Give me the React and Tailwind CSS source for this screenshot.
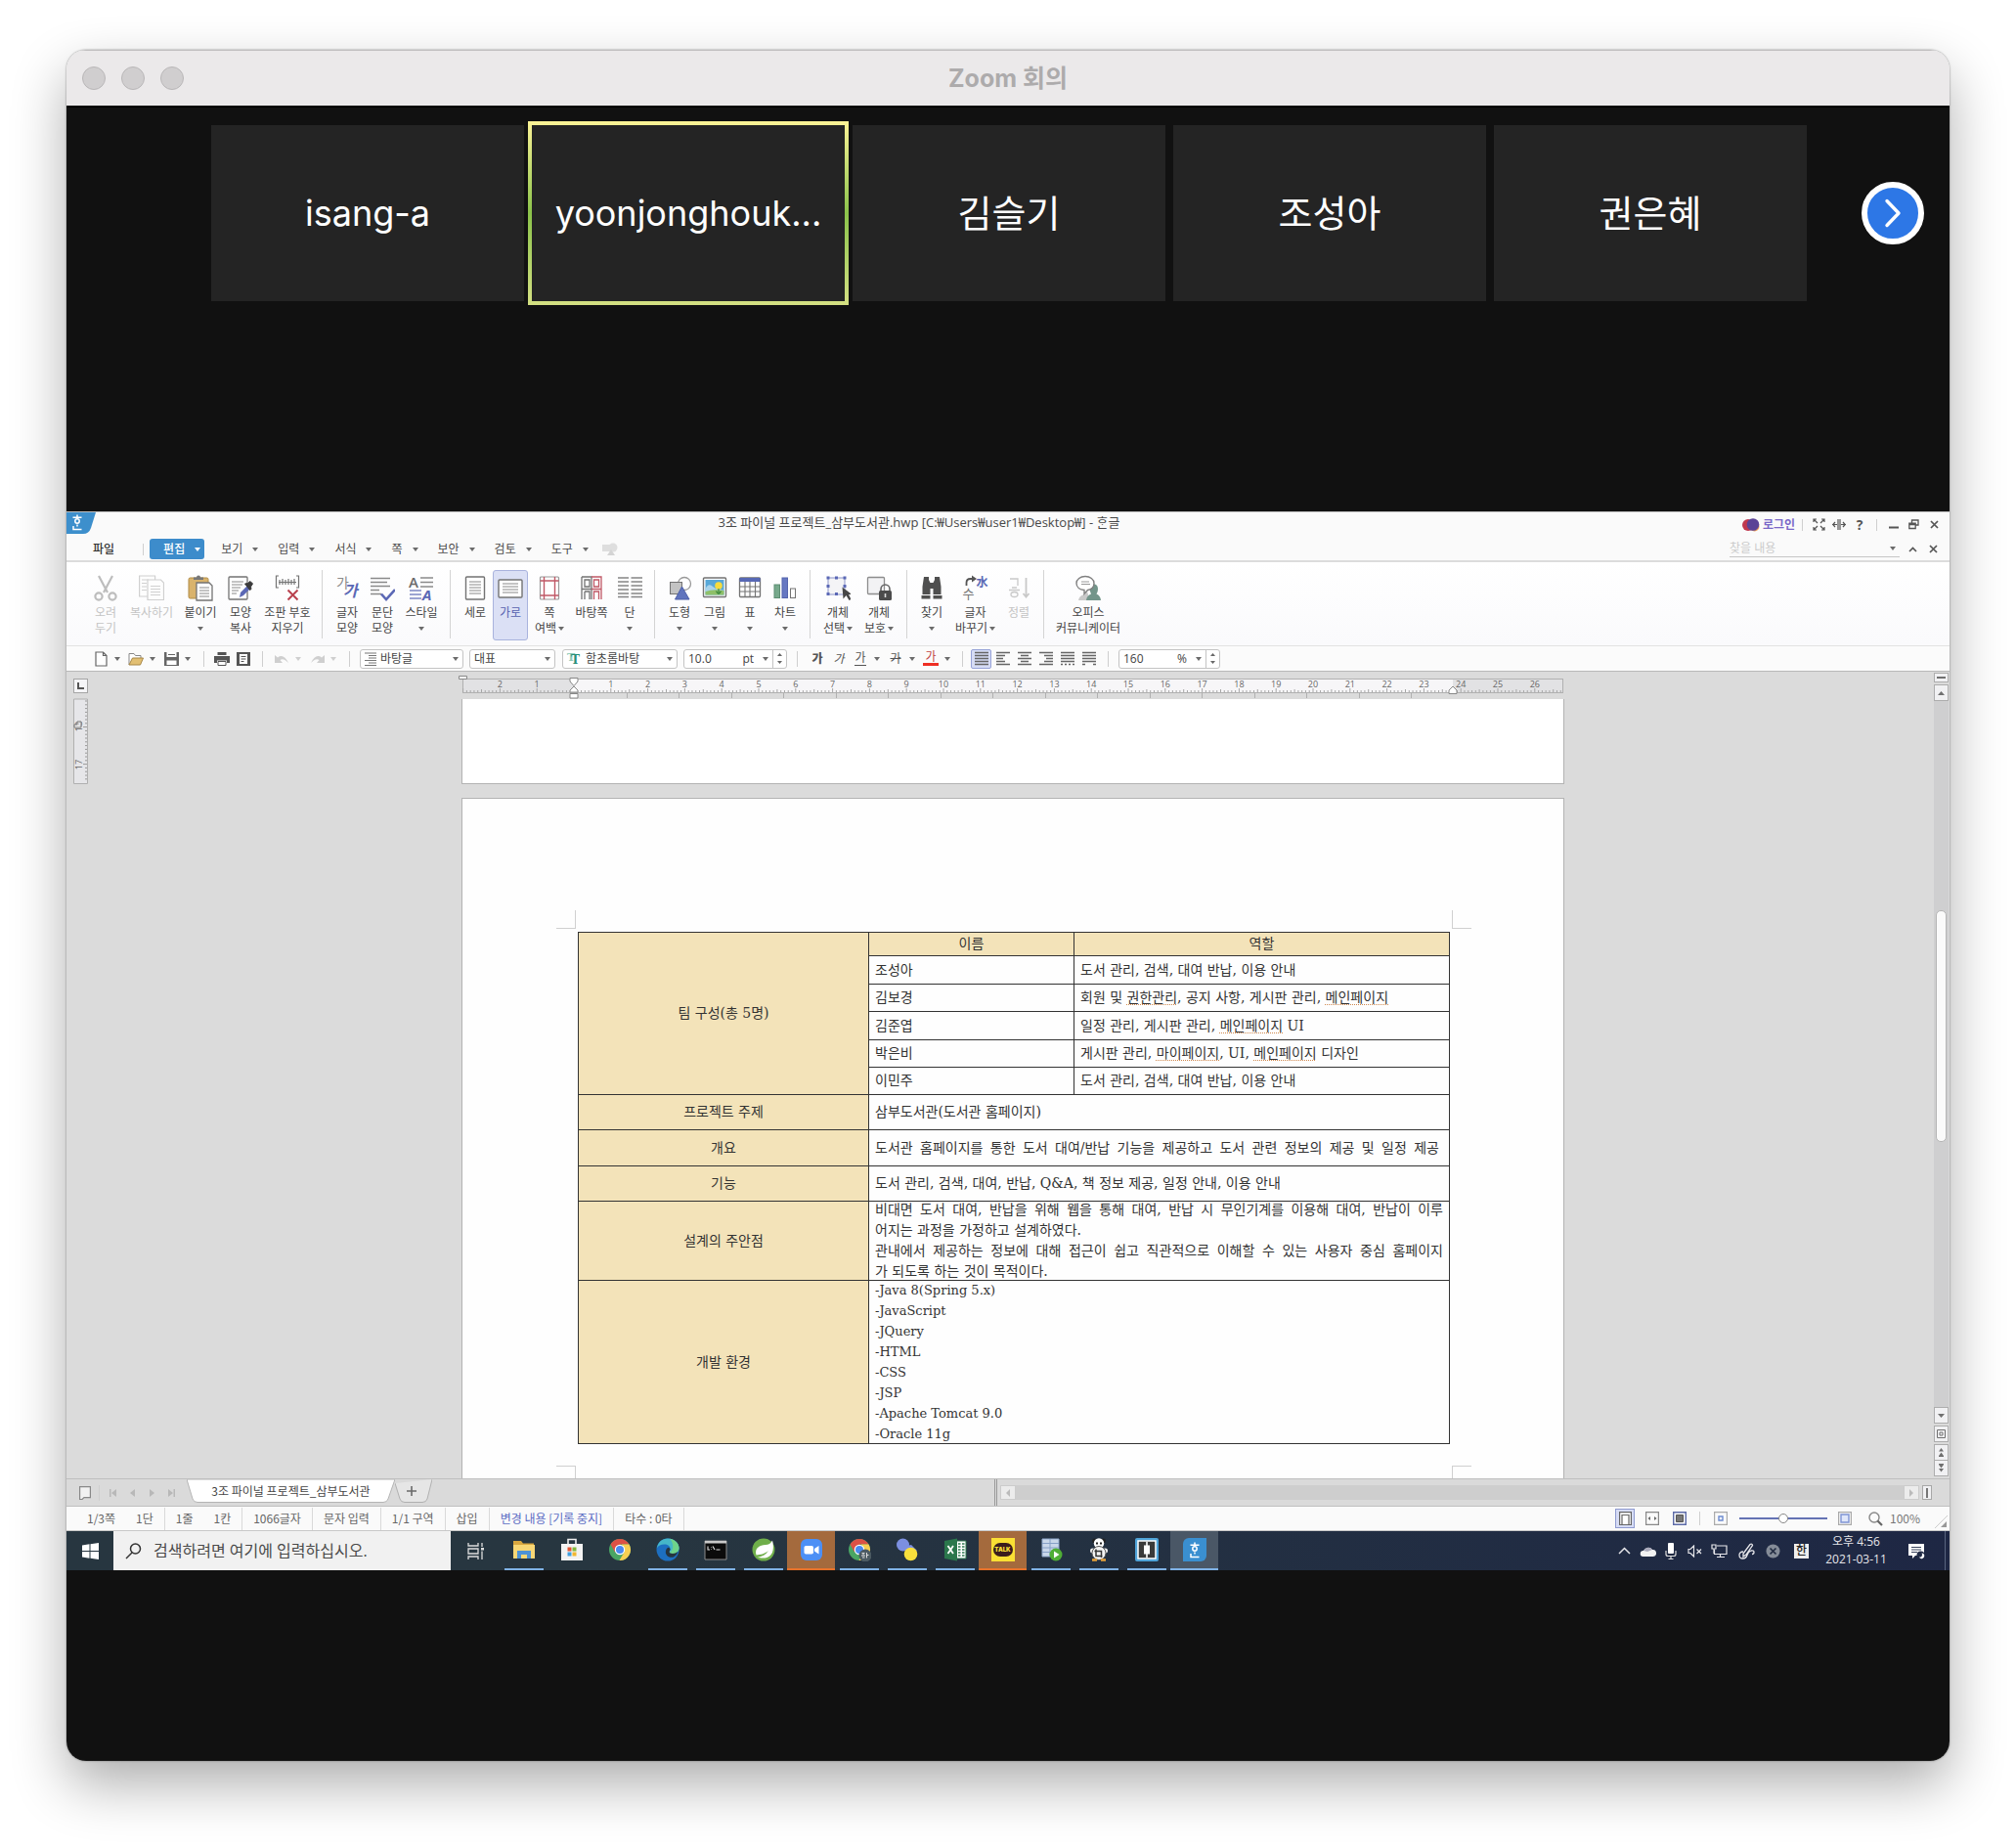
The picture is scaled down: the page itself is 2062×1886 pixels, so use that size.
import React from "react";

const UI = "font-['Open_Sans','Noto_Sans_CJK_KR',sans-serif]";

function Svg({ w, h, className = "", children, ...rest }) {
  return (
    <svg
      width={w}
      height={h}
      viewBox={`0 0 ${w} ${h}`}
      fill="none"
      aria-hidden="true"
      className={`shrink-0 ${className}`}
      {...rest}
    >
      {children}
    </svg>
  );
}

const Caret = ({ className = "text-[#6b6b6b]" }) => (
  <Svg w={6} h={4} className={className}>
    <path d="M0 0h6L3 4z" fill="currentColor" />
  </Svg>
);

const Divider = ({ className = "" }) => <span className={`w-px shrink-0 bg-[#cfcfcf] ${className}`} />;

/* ---------- Video strip ---------- */

function Tile({ name, active, size = "text-[38px]" }) {
  return (
    <li className="relative flex h-[180px] w-80 shrink-0 items-center justify-center bg-[#242424]">
      {active && (
        <span className="absolute -inset-1 bg-linear-to-b from-[#fbf396] via-[#8bc34a] to-[#d4e082]">
          <span className="absolute inset-1 bg-[#242424]" />
        </span>
      )}
      <span className={`relative font-['Inter','Noto_Sans_CJK_KR',sans-serif] leading-none text-white ${size}`}>
        {name}
      </span>
    </li>
  );
}

function VideoStrip() {
  return (
    <section className="flex h-[415px] items-start border-t-2 border-black bg-[#111111]">
      <ul className="ml-[148px] mt-[18px] flex gap-2">
        <Tile name="isang-a" size="text-4xl" />
        <Tile name="yoonjonghouk..." size="text-4xl" active />
        <Tile name="김슬기" />
        <Tile name="조성아" />
        <Tile name="권은혜" />
      </ul>
      <button
        aria-label="다음"
        className="mr-[26px] ml-auto mt-[76px] flex size-16 shrink-0 items-center justify-center rounded-full border-[6px] border-white bg-[#2d77e6]"
      >
        <Svg w={20} h={30}>
          <path d="M4 2.500L16 15 4 27.500" stroke="#fff" strokeWidth="3.400" strokeLinecap="round" strokeLinejoin="round" />
        </Svg>
      </button>
    </section>
  );
}

/* ---------- Word processor: title and menus ---------- */

const HanGlyph = ({ className = "" }) => (
  <svg viewBox="0 0 12 17" fill="none" aria-hidden="true" className={className} stroke="currentColor" strokeWidth="1.500">
    <path d="M6 .5v2M1.500 3.300h9" />
    <circle cx="6" cy="7" r="2.200" />
    <path d="M6 10.500v2M2 12v3.500h8.500" />
  </svg>
);

function TitleRow() {
  return (
    <div className="flex h-[26px] border-t border-[#bdbdbd] bg-[#fafafa]">
      <div className="relative h-[22px] w-[30px] shrink-0">
        <Svg w={30} h={22}>
          <path d="M0 0h30l-5 16q-2 6-8 6H0z" fill="#3d8fcc" />
        </Svg>
        <HanGlyph className="absolute top-[2px] left-[5px] h-[17px] w-3 text-white" />
      </div>
      <h2 className="flex-1 text-center text-[13px] leading-[21px] whitespace-nowrap text-[#484848]">
        3조 파이널 프로젝트_삼부도서관.hwp [C:₩Users₩user1₩Desktop₩] - ᄒᆞᆫ글
      </h2>
      <div className="flex w-[212px] shrink-0 items-center text-[#555]">
        <Svg w={18} h={14}>
          <circle cx="6" cy="7" r="6" fill="#c0384f" />
          <circle cx="12.500" cy="8.500" r="5" fill="#f0a35b" />
          <circle cx="11" cy="6.500" r="6.300" fill="#5b4396" />
        </Svg>
        <button className="ml-[3px] text-xs leading-4 font-bold whitespace-nowrap text-[#7b68c8]">로그인</button>
        <Divider className="ml-[7px] h-3" />
        <button aria-label="전체 화면" className="ml-[10px]">
          <Svg w={13} h={13} stroke="currentColor" strokeWidth="1.200">
            <path d="M1 4V1h3M9 1h3v3M12 9v3H9M4 12H1V9M1 1l4 4M12 1L8 5M12 12L8 8M1 12l4-4" />
          </Svg>
        </button>
        <button aria-label="창 나누기" className="ml-[7px]">
          <Svg w={14} h={13} stroke="currentColor" strokeWidth="1.200">
            <path d="M6 1v11M8 1v11M0 6.500h5M9 6.500h5M3 4L.8 6.500 3 9M11 4l2.200 2.500L11 9" />
          </Svg>
        </button>
        <button aria-label="도움말" className="ml-2 w-3 text-sm leading-none font-bold">?</button>
        <Divider className="ml-[11px] h-3" />
        <button aria-label="최소화" className="ml-3">
          <Svg w={10} h={12} stroke="currentColor" strokeWidth="2"><path d="M0 8.500h10" /></Svg>
        </button>
        <button aria-label="이전 크기로" className="ml-[10px]">
          <Svg w={11} h={11} stroke="currentColor" strokeWidth="1.300">
            <path d="M3.500 4V1H10v5H7.500M.8 4.200h6.400v5.300H.8zM.8 5.500h6.400" />
          </Svg>
        </button>
        <button aria-label="닫기" className="ml-[11px]">
          <Svg w={9} h={9} stroke="currentColor" strokeWidth="1.700"><path d="M1 1l7 7M8 1L1 8" /></Svg>
        </button>
      </div>
    </div>
  );
}

function MenuRow() {
  const items = ["보기", "입력", "서식", "쪽", "보안", "검토", "도구"];
  return (
    <nav className="flex h-[26px] items-center border-b-2 border-[#dcdcdc] bg-[#fafafa] pt-px pl-[27px] text-xs leading-4 text-[#4a4a4a]">
      <button className="font-medium whitespace-nowrap text-[#333]">파일</button>
      <Divider className="ml-[29px] h-3" />
      <button className="mr-[3px] ml-[6px] flex h-[21px] shrink-0 items-center gap-[10px] rounded-[3px] bg-[#3d8ccb] pr-1 pl-[14px] font-medium text-white">
        편집
        <Caret className="text-white" />
      </button>
      {items.map((t) => (
        <button key={t} className="flex shrink-0 items-center gap-[10px] pr-[6px] pl-[14px] whitespace-nowrap">
          {t}
          <Caret />
        </button>
      ))}
      <Svg w={16} h={14} className="ml-2">
        <rect y="2" width="8" height="7" fill="#dedede" />
        <circle cx="11" cy="5" r="4.500" fill="#dedede" />
        <path d="M5 13l4-6 4 6z" fill="#d4d4d4" />
      </Svg>
      <div className="mr-3 ml-auto flex items-center text-[#555]">
        <label className="flex w-[174px] items-center border-b border-[#c6c6c6]">
          <input
            aria-label="찾을 내용"
            placeholder="찾을 내용"
            className="w-0 flex-1 bg-transparent text-xs leading-4 outline-none placeholder:text-[#cbcbcb]"
          />
          <Caret className="mr-1 text-[#6b6b6b]" />
        </label>
        <button aria-label="리본 접기" className="ml-[9px]">
          <Svg w={9} h={6} stroke="currentColor" strokeWidth="1.600"><path d="M1 5l3.500-3.500L8 5" /></Svg>
        </button>
        <button aria-label="문서 닫기" className="ml-3">
          <Svg w={9} h={9} stroke="currentColor" strokeWidth="1.700"><path d="M1 1l7 7M8 1L1 8" /></Svg>
        </button>
      </div>
    </nav>
  );
}

/* ---------- Ribbon ---------- */

const G = "#737373";
const B = "#5b68b5";
const R = "#c05866";

const ribbonIcons = {
  cut: (
    <g stroke="#bdbdbd" strokeWidth="2.200">
      <path d="M6 1l9 17M20 1l-9 17" />
      <circle cx="6" cy="22" r="3.600" />
      <circle cx="20" cy="22" r="3.600" />
    </g>
  ),
  copy: (
    <g stroke="#d0d0d0" strokeWidth="1.200" fill="#fdfdfd">
      <path d="M.6 1h16v21H.6z" />
      <path d="M3 5h7M3 8.500h5M3 12h5M3 15.500h5" />
      <path d="M9 5h13.500l3 3v17.500H9z" />
      <path d="M12 11.500h10M12 14.500h10M12 17.500h10M12 20.500h10" />
    </g>
  ),
  paste: (
    <g>
      <rect x="1" y="3" width="20" height="21" rx="1.500" fill="#d9b36c" stroke="#b08b45" />
      <path d="M6 5V2.500h3a2 2 0 014 0h3V5z" fill="#777" />
      <path d="M9 8h13l3 3v15H9z" fill="#fff" stroke={G} strokeWidth="1.300" />
      <path d="M12 13h10M12 16h10M12 19h10M12 22h10" stroke="#8a8a8a" strokeWidth="1.200" />
    </g>
  ),
  picker: (
    <g>
      <rect x="1" y="2" width="19" height="23" rx="1" fill="#fff" stroke={G} strokeWidth="1.300" />
      <path d="M4 7h12M4 10h11M4 13h9M4 16h7M4 19h5" stroke="#8a8a8a" strokeWidth="1.200" />
      <path d="M12 23l1-5 7-7 3 3-7 7z" fill={B} />
      <path d="M17.500 9l3-.5L23 6.500l2.500 2.500-2 3 .5 2.500-1.500 1z" fill="#3b3b3b" stroke="#3b3b3b" />
    </g>
  ),
  clear: (
    <g>
      <path d="M4 1H1.500v12H4M22 1h2.500v12H22" stroke={G} strokeWidth="1.200" />
      <path d="M5 5v5M8 4v6M11 5v5M14 4v6M17 5v5M20 4v6M4 7.500h18" stroke={G} strokeWidth="1.200" />
      <path d="M13.500 15.500l10 10M23.500 15.500l-10 10" stroke="#b9424f" strokeWidth="2" />
    </g>
  ),
  para: (
    <g>
      <path d="M1 3.500h20M1 7.500h17M1 11.500h20M1 15.500h9M1 19.500h11" stroke="#8a8a8a" strokeWidth="1.400" />
      <path d="M12 19.500l5 5.500 9-10" stroke={B} strokeWidth="2.600" />
    </g>
  ),
  portrait: (
    <g>
      <rect x="3.500" y="2" width="19" height="23" rx="1" fill="#fff" stroke={G} strokeWidth="1.400" />
      <path d="M7 7h12M7 10h12M7 13h12M7 16h12M7 19h12" stroke="#8a8a8a" strokeWidth="1.200" />
    </g>
  ),
  landscape: (
    <g>
      <rect x="1" y="5" width="24" height="18" rx="1" fill="#fff" stroke={G} strokeWidth="1.400" />
      <path d="M5 9h16M5 12h16M5 15h16M5 18h16" stroke="#8a8a8a" strokeWidth="1.200" />
    </g>
  ),
  margin: (
    <g>
      <rect x="3.500" y="2" width="19" height="23" rx="1" fill="#fff" stroke="#999" strokeWidth="1.200" />
      <path d="M7.500 2v23M18.500 2v23M3.500 6h19M3.500 21h19" stroke={R} strokeWidth="1.400" />
    </g>
  ),
  master: (
    <g strokeWidth="1.300">
      <path d="M3 2h10v23M3 2v23M6 5h5v7H6zM3 14.500h10M6 17h5v8M6 17v8" stroke={G} />
      <path d="M13 2h10v23M15.500 5h5v7h-5zM13 14.500h10M15.500 25v-8h5v8" stroke={R} />
    </g>
  ),
  columns: (
    <path d="M1 3h11M1 7h11M1 11h11M1 15h11M1 19h11M1 22.500h11M14.500 3H26M14.500 7H26M14.500 11H26M14.500 15H26M14.500 19H26M14.500 22.500H26" stroke="#858585" strokeWidth="1.400" />
  ),
  shape: (
    <g>
      <circle cx="18" cy="9" r="6.500" fill="#fff" stroke="#999" strokeWidth="1.300" />
      <rect x="3.500" y="7.500" width="12" height="12" fill="#c3c3c3" stroke={G} />
      <path d="M8.500 25L15.500 12 23 25z" fill="#6074bd" stroke="#4d5fa8" />
    </g>
  ),
  picture: (
    <g>
      <rect x="1.500" y="3" width="23" height="19.500" rx="1" fill="#fff" stroke={G} strokeWidth="1.400" />
      <path d="M3.500 5h19v15.500h-19z" fill="#58a8d8" />
      <path d="M3.500 14q3-6 7-2.500T17 14l5.500 2v4.500h-19z" fill="#a9d3ea" />
      <path d="M3.500 17q8-3 19-1v4.500h-19z" fill="#8fc069" />
      <circle cx="17" cy="11" r="3.800" fill="#f7dc3d" />
      <path d="M17 14v6M14.500 16.500q1 2.500 2.500 2.500t2.500-2.500" stroke="#3f8a3f" strokeWidth="1.200" />
    </g>
  ),
  table: (
    <g>
      <rect x="2.500" y="3" width="21" height="19.500" rx="1" fill="#fff" stroke={G} strokeWidth="1.300" />
      <path d="M2.500 3h21v4h-21z" fill="#5768b4" />
      <path d="M2.500 12h21M2.500 17h21M8 7v15M13 7v15M18.500 7v15" stroke={G} strokeWidth="1.100" />
    </g>
  ),
  chart: (
    <g>
      <rect x="2" y="10" width="5.500" height="13.500" fill="#77a98c" stroke="#5d8e72" />
      <rect x="10" y="3" width="5.500" height="20.500" fill="#6678c2" stroke="#5464ad" />
      <rect x="18.500" y="14" width="5" height="9.500" fill="#fff" stroke={G} />
    </g>
  ),
  select: (
    <g>
      <rect x="3" y="3" width="17" height="17" fill="#f4f4f6" stroke="#8b94c9" />
      <path d="M1.500 1.500h3v3h-3zM10 1.500h3v3h-3zM18.500 1.500h3v3h-3zM1.500 10h3v3h-3zM1.500 18h3v3h-3zM10 18h3v3h-3zM18.500 10h3v3h-3z" fill={B} />
      <path d="M17.500 12.500l1 12 3-3.500 3 5 2-1-2.500-5h3.500z" fill="#474747" />
    </g>
  ),
  protect: (
    <g>
      <rect x="1.500" y="2.500" width="17" height="17" rx="1" fill="#f2f2f4" stroke="#8d8d8d" strokeWidth="1.300" />
      <path d="M15 17v-2.500a4.500 4.500 0 019 0V17" stroke="#666" strokeWidth="1.600" />
      <rect x="13" y="16" width="13" height="10" rx="1.500" fill="#4b4b4b" />
      <path d="M19.500 19v4" stroke="#ddd" strokeWidth="1.600" />
    </g>
  ),
  find: (
    <g fill="#4f4f4f">
      <path d="M5 2h5v3l1.500 3V20H3.500V12zM21 2h-5v3l-1.500 3V20h8V12z" />
      <path d="M11 8h4v6h-4zM2.500 21h9v3.500h-9zM14.500 21h9v3.500h-9z" />
    </g>
  ),
  sort: (
    <g stroke="#c9c9c9" strokeWidth="1.300">
      <path d="M4 4h8v7M3 15.500h11M6 13h5" />
      <ellipse cx="8.500" cy="20" rx="3.500" ry="2.500" />
      <path d="M20.500 3v18M17.500 19l3 3.500 3-3.500" strokeWidth="1.800" />
    </g>
  ),
  talk: (
    <g>
      <path d="M3 26q1-5 6-6l3-3 3 9z" fill="#c9c9c9" />
      <path d="M11 26q.5-5 5-6.500-2-4-1-8 2-3 5-2 3 1 3 5 0 3-1.500 5 4 1.500 4.500 6.500z" fill="#73958a" />
      <path d="M10 1.500c5 0 9 3 9 7s-3 6.500-6.500 7L9 19.500v-4c-4.500-.3-8-3-8-7s4-7 9-7z" fill="#fff" stroke="#808080" strokeWidth="1.400" />
      <path d="M6 7h8M6 9.500h9" stroke="#999" strokeWidth="1.100" />
    </g>
  ),
};

function RibbonIcon({ name }) {
  if (name === "char")
    return (
      <span className="relative block h-[27px] w-[26px] leading-none">
        <span className="absolute top-[1px] left-[2px] text-sm leading-none text-[#8a8a8a]">가</span>
        <span className="absolute top-[8px] left-[9px] text-base leading-none font-bold text-[#5b68b5] italic">가</span>
      </span>
    );
  if (name === "style")
    return (
      <span className="relative block h-[27px] w-[26px] leading-none">
        <Svg w={26} h={27} stroke="#8a8a8a" strokeWidth="1.300">
          <path d="M12 3h13M12 7.500h13M12 12h13" />
          <path d="M1 16h12M1 20h12M1 24h12" stroke="#7c86c4" />
        </Svg>
        <span className="absolute top-0 left-0 text-[15px] leading-none font-semibold text-[#6a6a6a]">A</span>
        <span className="absolute top-[13px] left-[14px] text-[15px] leading-none font-bold text-[#5b68b5] italic">A</span>
      </span>
    );
  if (name === "replace")
    return (
      <span className="relative block h-[27px] w-[26px] leading-none">
        <Svg w={26} h={27}>
          <path d="M3.500 11V8q0-4 4-4h2" stroke="#555" strokeWidth="1.800" />
          <path d="M9 .5l5 3.500-5 3.500z" fill="#555" />
        </Svg>
        <span className="absolute top-[13px] left-0 text-[13px] leading-none text-[#777]">수</span>
        <span className="absolute top-[2px] left-[14px] text-xs leading-none font-bold text-[#5b68b5]">水</span>
      </span>
    );
  return (
    <Svg w={26} h={27}>
      {ribbonIcons[name]}
    </Svg>
  );
}

const ribbonGroups = [
  [
    { w: "w-9", icon: "cut", a: "오려", b: "두기", off: true },
    { w: "w-[58px]", icon: "copy", a: "복사하기", off: true },
    { w: "w-[42px]", icon: "paste", a: "붙이기", drop: true },
    { w: "w-10", icon: "picker", a: "모양", b: "복사" },
    { w: "w-14", icon: "clear", a: "조판 부호", b: "지우기" },
  ],
  [
    { w: "w-9", icon: "char", a: "글자", b: "모양" },
    { w: "w-9", icon: "para", a: "문단", b: "모양" },
    { w: "w-11", icon: "style", a: "스타일", drop: true },
  ],
  [
    { w: "w-9", icon: "portrait", a: "세로" },
    { w: "w-9", icon: "landscape", a: "가로", on: true },
    { w: "w-11", icon: "margin", a: "쪽", b: "여백", drop: true },
    { w: "w-[42px]", icon: "master", a: "바탕쪽" },
    { w: "w-9", icon: "columns", a: "단", drop: true },
  ],
  [
    { w: "w-9", icon: "shape", a: "도형", drop: true },
    { w: "w-9", icon: "picture", a: "그림", drop: true },
    { w: "w-9", icon: "table", a: "표", drop: true },
    { w: "w-9", icon: "chart", a: "차트", drop: true },
  ],
  [
    { w: "w-[42px]", icon: "select", a: "개체", b: "선택", drop: true },
    { w: "w-[42px]", icon: "protect", a: "개체", b: "보호", drop: true },
  ],
  [
    { w: "w-9", icon: "find", a: "찾기", drop: true },
    { w: "w-[53px]", icon: "replace", a: "글자", b: "바꾸기", drop: true },
    { w: "w-9", icon: "sort", a: "정렬", off: true },
  ],
  [{ w: "w-[76px]", icon: "talk", a: "오피스", b: "커뮤니케이터" }],
];

function RibbonButton({ w, icon, a, b, drop, off, on }) {
  const tone = off ? "text-[#c4c4c4]" : on ? "text-[#5560b0]" : "text-[#444]";
  return (
    <button
      disabled={off}
      className={`flex h-[72px] shrink-0 flex-col items-center rounded-[3px] border pt-1 text-xs leading-4 whitespace-nowrap ${w} ${tone} ${
        on ? "border-[#a9b3dd] bg-[#dbe0f5]" : "border-transparent"
      }`}
    >
      <RibbonIcon name={icon} />
      <span className="mt-1">{a}</span>
      <span className="flex h-4 items-center gap-[2px]">
        {b}
        {drop && <Caret />}
      </span>
    </button>
  );
}

function Ribbon() {
  return (
    <div className="flex h-[86px] border-b border-[#e2e2e2] bg-linear-to-b from-white to-[#fafafc] pt-2 pl-[15px]">
      {ribbonGroups.map((group, i) => (
        <div key={i} className="flex h-[70px] items-start border-r border-[#d4d4d4] px-[7px] last:border-r-0">
          {group.map((item) => (
            <RibbonButton key={item.icon} {...item} />
          ))}
        </div>
      ))}
    </div>
  );
}

/* ---------- Formatting bar ---------- */

function Cell({ label, children, faded }) {
  return (
    <button aria-label={label} className="flex w-9 shrink-0 items-center gap-[6px]">
      <span className="flex w-4 justify-center">{children}</span>
      <Caret className={faded ? "text-[#cfcfcf]" : "text-[#6b6b6b]"} />
    </button>
  );
}

function Picker({ label, value, icon, className, pad }) {
  return (
    <div className={`relative flex h-5 shrink-0 items-center rounded-[3px] border border-[#c4c4c4] bg-white ${className}`}>
      {icon && <span className="pointer-events-none absolute left-1">{icon}</span>}
      <select aria-label={label} className={`h-full w-full appearance-none bg-transparent text-xs leading-4 text-[#444] ${pad}`}>
        <option>{value}</option>
      </select>
      <Caret className="pointer-events-none absolute right-1 text-[#6b6b6b]" />
    </div>
  );
}

function Stepper({ label, value, unit, className }) {
  return (
    <label className={`flex h-5 shrink-0 items-center rounded-[3px] border border-[#c4c4c4] bg-white text-xs leading-4 text-[#444] ${className}`}>
      <input aria-label={label} defaultValue={value} className="w-0 flex-1 bg-transparent pl-1 outline-none" />
      <span>{unit}</span>
      <Caret className="mr-1 ml-[9px] text-[#6b6b6b]" />
      <span className="flex h-full w-[14px] flex-col items-center justify-center gap-[5px] border-l border-[#c4c4c4]">
        <Svg w={5} h={3}><path d="M0 3h5L2.500 0z" fill="#666" /></Svg>
        <Svg w={5} h={3}><path d="M0 0h5L2.500 3z" fill="#666" /></Svg>
      </span>
    </label>
  );
}

const alignPaths = {
  양쪽: "M0 1.500h14M0 4.500h14M0 7.500h14M0 10.500h14M0 13.500h14",
  왼쪽: "M0 1.500h14M0 4.500h9M0 7.500h7M0 10.500h9M0 13.500h14",
  가운데: "M0 1.500h14M3 4.500h8M0 7.500h14M3 10.500h8M0 13.500h14",
  오른쪽: "M0 1.500h14M5 4.500h9M7 7.500h7M5 10.500h9M0 13.500h14",
  배분: "M0 1.500h14M0 4.500h14M0 7.500h14M0 10.500h14M0 13.500h2M4 13.500h2M8 13.500h2M12 13.500h2",
  나눔: "M0 1.500h14M0 4.500h14M0 7.500h14M0 10.500h14M0 13.500h3M11 13.500h3",
};

const AlignIcon = ({ name }) => (
  <Svg w={14} h={15} stroke="#666" strokeWidth="1.600"><path d={alignPaths[name]} /></Svg>
);

function FormatBar() {
  return (
    <div className="flex h-[26px] items-center border-b border-[#b9b9b9] bg-[#fbfbfb] pl-[27px]">
      <Cell label="새 문서">
        <Svg w={13} h={16}><path d="M1 1h7.500L12 4.500V15H1zM8.500 1v3.500H12" fill="#fff" stroke="#666" strokeWidth="1.200" /></Svg>
      </Cell>
      <Cell label="열기">
        <Svg w={16} h={14}>
          <path d="M1 13V1.500h5l1.500 2H13v3" fill="#fff" stroke="#888" />
          <path d="M1 13L4.500 6H15.500L12.500 13z" fill="#e2bf72" stroke="#a78746" />
        </Svg>
      </Cell>
      <Cell label="저장">
        <Svg w={15} h={14}><path d="M0 0h15v14H0z" fill="#666" /><path d="M2.500 0h10v5h-10zM2.500 8.500h10V13h-10z" fill="#fff" /><path d="M4 2.500h7" stroke="#666" /></Svg>
      </Cell>
      <Divider className="ml-[5px] h-4" />
      <button aria-label="인쇄" className="ml-[10px]">
        <Svg w={16} h={14}>
          <path d="M3.500 0h9v3h-9zM0 4h16v7h-3V8.500H3V11H0z" fill="#555" />
          <path d="M4 9.500h8V13.500H4z" fill="#fff" stroke="#555" />
        </Svg>
      </button>
      <button aria-label="미리 보기" className="ml-[6px]">
        <Svg w={16} h={14}>
          <path d="M1 0h14v14H1z" fill="#555" />
          <path d="M4 2h8v10H4z" fill="#fff" />
          <path d="M5.500 4.500h5M5.500 7h5M5.500 9.500h3" stroke="#555" />
        </Svg>
      </button>
      <Divider className="mr-[11px] ml-[11px] h-4" />
      <Cell label="되돌리기" faded>
        <Svg w={15} h={10}><path d="M0 9V1l3 2.500Q9-1 14 9 9 3.500 5.500 6L8 9z" fill="#cfcfcf" /></Svg>
      </Cell>
      <Cell label="다시 실행" faded>
        <Svg w={15} h={10}><path d="M15 9V1l-3 2.500Q6-1 1 9q5-5.500 8.500-3L7 9z" fill="#cfcfcf" /></Svg>
      </Cell>
      <Divider className="ml-[5px] h-4" />
      <Picker
        label="스타일" value="바탕글" className="ml-[10px] w-[106px]" pad="pl-5"
        icon={<Svg w={12} h={14} stroke="#777" strokeWidth="1.200"><path d="M0 1h12M4 3.500h8M4 6h8M0 8.500h12M4 11h8M0 13.500h12" /></Svg>}
      />
      <Picker label="언어" value="대표" className="ml-[6px] w-[88px]" pad="pl-1" />
      <Picker
        label="글꼴" value="함초롬바탕" className="ml-[7px] w-[118px]" pad="pl-[23px]"
        icon={
          <span className="relative block h-[14px] w-4 font-['DejaVu_Serif',serif] leading-none font-bold">
            <span className="absolute top-0 left-0 text-[11px] leading-none text-[#8cc9b8]">T</span>
            <span className="absolute top-[2px] left-1 text-xs leading-none text-[#2a8f78]">T</span>
          </span>
        }
      />
      <Stepper label="글자 크기" value="10.0" unit="pt" className="ml-[6px] w-[106px]" />
      <Divider className="ml-[10px] h-4" />
      <div className="ml-3 flex items-center text-xs leading-4 text-[#555]">
        <button className="mr-[6px] w-4 font-black">가</button>
        <button className="mr-[6px] w-4 italic">가</button>
        <Cell label="밑줄"><span className="border-b border-[#555] leading-[14px]">가</span></Cell>
        <Cell label="취소선"><span className="line-through">가</span></Cell>
        <Cell label="글자 색"><span className="w-4 border-b-[3px] border-[#ee2f24] text-center leading-[12px] text-[#c24545]">가</span></Cell>
      </div>
      <Divider className="ml-1 h-4" />
      <button aria-label="양쪽 정렬" className="ml-2 flex h-5 w-[21px] shrink-0 items-center justify-center rounded-[2px] border border-[#97a3d8] bg-[#d6dcf5]">
        <AlignIcon name="양쪽" />
      </button>
      <div className="ml-[5px] flex gap-2">
        {["왼쪽", "가운데", "오른쪽", "배분", "나눔"].map((n) => (
          <button key={n} aria-label={`${n} 정렬`}><AlignIcon name={n} /></button>
        ))}
      </div>
      <Divider className="ml-3 h-4" />
      <Stepper label="줄 간격" value="160" unit="%" className="ml-[10px] w-[104px]" />
    </div>
  );
}

/* ---------- Document ---------- */

function Ruler() {
  const cm = 37.8;
  const zero = 115;
  const ticks = [];
  for (let i = -30; i <= 267; i++) {
    const x = zero + (i * cm) / 10;
    const len = i % 10 === 0 ? 4 : i % 5 === 0 ? 3 : 2;
    ticks.push(<path key={i} d={`M${x} 21v-${len}`} />);
  }
  const labels = [];
  for (let n = -2; n <= 26; n++) if (n !== 0) labels.push(n);
  return (
    <svg viewBox="0 0 1128 28" className="block h-7 w-[1128px] overflow-visible" aria-hidden="true">
      <rect x="1.500" y="7.500" width="1125" height="14" fill="#e2e2e4" stroke="#b0b0b0" />
      <rect x="115" y="8" width="899" height="13" fill="#f7f6f8" />
      <g stroke="#a6a6a6">{ticks}</g>
      <g stroke="#b0b0b0">
        {Array.from({ length: 16 }, (_, k) => (
          <path key={k} d={`M${Math.round(115 + (k + 1) * 53.5)}.5 22v5`} />
        ))}
      </g>
      <g fontSize="9" fill="#666" textAnchor="middle">
        {labels.map((n) => (
          <text key={n} x={zero + n * cm} y="15.500">{Math.abs(n)}</text>
        ))}
      </g>
      <g fill="#fff" stroke="#888">
        <path d="M-2.500 4.500h8v3h-8z" />
        <path d="M111 6.500h8v3.500l-4 4.500-4-4.500z" />
        <path d="M115 15l4 4v2h-8v-2zM111 22.500h8v4.500h-8z" />
        <path d="M1014 15l4 4v3.500h-8V19z" />
      </g>
    </svg>
  );
}

const Typo = ({ children }) => (
  <span className="underline decoration-[#d08a50] decoration-dotted decoration-1 underline-offset-2">{children}</span>
);

const members = [
  ["h-[29px]", "조성아", <>도서 관리, 검색, 대여 반납, 이용 안내</>],
  ["h-7", "김보경", <>회원 및 <Typo>권한관리</Typo>, 공지 사항, 게시판 관리, <Typo>메인페이지</Typo></>],
  ["h-[29px]", "김준엽", <>일정 관리, 게시판 관리, <Typo>메인페이지</Typo> UI</>],
  ["h-7", "박은비", <>게시판 관리, <Typo>마이페이지</Typo>, UI, <Typo>메인페이지</Typo> 디자인</>],
  ["h-7", "이민주", <>도서 관리, 검색, 대여 반납, 이용 안내</>],
];

const stack = ["Java 8(Spring 5.x)", "JavaScript", "JQuery", "HTML", "CSS", "JSP", "Apache Tomcat 9.0", "Oracle 11g"];

function DocTable() {
  const head = "border border-[#333] bg-[#f3e3b9] p-0 text-center font-normal";
  const cell = "border border-[#333] px-[6px] py-0";
  return (
    <table className="w-full table-fixed border-collapse font-['DejaVu_Serif','Noto_Sans_CJK_KR',serif] text-sm leading-[21px] whitespace-nowrap text-[#333]">
      <colgroup>
        <col className="w-[297px]" />
        <col className="w-[210px]" />
        <col />
      </colgroup>
      <tbody>
        <tr className="h-6">
          <th rowSpan={6} scope="rowgroup" className={head}>팀 구성(총 5명)</th>
          <th scope="col" className={head}>이름</th>
          <th scope="col" className={head}>역할</th>
        </tr>
        {members.map(([h, name, role]) => (
          <tr key={name} className={h}>
            <td className={cell}>{name}</td>
            <td className={cell}>{role}</td>
          </tr>
        ))}
        <tr className="h-9">
          <th scope="row" className={head}>프로젝트 주제</th>
          <td colSpan={2} className={cell}>삼부도서관(도서관 홈페이지)</td>
        </tr>
        <tr className="h-[37px]">
          <th scope="row" className={head}>개요</th>
          <td colSpan={2} className={cell}>
            <p className="mr-1 whitespace-normal [text-align-last:justify]">
              도서관 홈페이지를 통한 도서 대여/반납 기능을 제공하고 도서 관련 정보의 제공 및 일정 제공
            </p>
          </td>
        </tr>
        <tr className="h-9">
          <th scope="row" className={head}>기능</th>
          <td colSpan={2} className={cell}>도서 관리, 검색, 대여, 반납, Q&amp;A, 책 정보 제공, 일정 안내, 이용 안내</td>
        </tr>
        <tr className="h-[81px]">
          <th scope="row" className={head}>설계의 주안점</th>
          <td colSpan={2} className={`${cell} whitespace-normal`}>
            <div className="flex h-20 flex-col justify-center">
              <p className="shrink-0 [text-align-last:justify]">비대면 도서 대여, 반납을 위해 웹을 통해 대여, 반납 시 무인기계를 이용해 대여, 반납이 이루</p>
              <p className="shrink-0">어지는 과정을 가정하고 설계하였다.</p>
              <p className="shrink-0 [text-align-last:justify]">관내에서 제공하는 정보에 대해 접근이 쉽고 직관적으로 이해할 수 있는 사용자 중심 홈페이지</p>
              <p className="shrink-0">가 되도록 하는 것이 목적이다.</p>
            </div>
          </td>
        </tr>
        <tr className="h-[167px]">
          <th scope="row" className={head}>개발 환경</th>
          <td colSpan={2} className={`${cell} text-[13px]`}>
            <div className="flex h-[166px] flex-col justify-center">
              {stack.map((s) => (
                <p key={s} className="shrink-0 leading-[21px]">-{s}</p>
              ))}
            </div>
          </td>
        </tr>
      </tbody>
    </table>
  );
}

function ScrollButton({ label, className, children }) {
  return (
    <button aria-label={label} className={`flex w-[15px] shrink-0 items-center justify-center border border-[#adadad] bg-[#f1f1f3] text-[#707070] ${className}`}>
      {children}
    </button>
  );
}

function VerticalScroll() {
  return (
    <div className="flex w-4 shrink-0 flex-col pb-[2px]">
      <ScrollButton label="편집 화면 나누기" className="mt-px h-[10px]">
        <Svg w={9} h={2}><path d="M0 1h9" stroke="currentColor" strokeWidth="2" /></Svg>
      </ScrollButton>
      <ScrollButton label="위로" className="mt-[2px] h-[17px]">
        <Svg w={7} h={4}><path d="M0 4h7L3.500 0z" fill="currentColor" /></Svg>
      </ScrollButton>
      <div className="flex w-[15px] flex-1 flex-col items-center bg-[#cfcfd0]">
        <div className="flex-[215]" />
        <div className="w-[11px] flex-[236] rounded-[5px] border border-[#b5b5b5] bg-[#fafafa]" />
        <div className="flex-[273]" />
      </div>
      <ScrollButton label="아래로" className="h-[17px]">
        <Svg w={7} h={4}><path d="M0 0h7L3.500 4z" fill="currentColor" /></Svg>
      </ScrollButton>
      <ScrollButton label="찾아가기" className="mt-[2px] h-[17px]">
        <Svg w={9} h={9} stroke="currentColor"><path d="M.5.5h8v8h-8zM3 3h3v3H3z" /></Svg>
      </ScrollButton>
      <ScrollButton label="이전 쪽" className="mt-[2px] h-[17px]">
        <Svg w={5} h={9}><path d="M0 3.500h5L2.500 0zM0 8h5L2.500 4.500zM0 8h5v1H0z" fill="currentColor" /></Svg>
      </ScrollButton>
      <ScrollButton label="다음 쪽" className="h-4 border-t-0">
        <Svg w={5} h={9}><path d="M0 0h5v1H0zM0 1h5L2.500 4.500zM0 5h5L2.500 8.500z" fill="currentColor" /></Svg>
      </ScrollButton>
    </div>
  );
}

function Corner({ className }) {
  return <span className={`w-5 border-[#d0d0d0] ${className}`} />;
}

function Workspace() {
  return (
    <div className="flex bg-[#dbdbdb]">
      <div className="w-[26px] shrink-0 pt-[7px] pl-[7px]">
        <div className="flex size-[15px] items-center justify-center border border-[#a5a5a5] bg-[#f5f5f7]">
          <Svg w={7} h={7}><path d="M1 0v6h6" stroke="#555" strokeWidth="2" /></Svg>
        </div>
        <svg viewBox="0 0 15 87" className="mt-[6px] block h-[87px] w-[15px] overflow-visible" aria-hidden="true">
          <path d="M.5 0h14v86.500H.5z" fill="#e6e6e9" stroke="#b0b0b0" />
          <g stroke="#9a9a9a">
            {Array.from({ length: 22 }, (_, k) => (
              <path key={k} d={`M14 ${2 + k * 3.8}h${k === 7 || k === 17 ? -4 : -2}`} />
            ))}
          </g>
          <g fontSize="9" fill="#666" textAnchor="middle">
            <text transform="translate(9 28) rotate(-90)">18</text>
            <text transform="translate(9 67) rotate(-90)">17</text>
          </g>
          <path d="M1 26h3v-3h4v6H1z" fill="#fff" fillOpacity=".6" stroke="#777" />
        </svg>
      </div>
      <div className="flex flex-1 flex-col items-center">
        <Ruler />
        <div className="h-[87px] w-[1128px] border border-t-0 border-[#b3b3b3] bg-white" />
        <article className="mt-[14px] w-[1128px] border border-b-0 border-[#b3b3b3] bg-[#fefefe] pt-[114px]">
          <div className="flex h-[19px] justify-between pr-[94px] pl-[96px]">
            <Corner className="border-r border-b" />
            <Corner className="border-b border-l" />
          </div>
          <div className="mt-[3px] pr-[116px] pl-[118px]">
            <DocTable />
          </div>
          <div className="mt-[22px] flex h-[13px] justify-between pr-[94px] pl-[96px]">
            <Corner className="border-t border-r" />
            <Corner className="border-t border-l" />
          </div>
        </article>
      </div>
      <VerticalScroll />
    </div>
  );
}

/* ---------- Tabs and status ---------- */

function TabBar() {
  return (
    <div className="flex h-[29px] items-center border-y border-[#bfbfbf] bg-[#dadada]">
      <Svg w={12} h={14} className="ml-[13px]"><path d="M.6.6h10.800v11H5L3 13.500H.6z" fill="#f2f2f2" stroke="#888" strokeWidth="1.200" /></Svg>
      <Divider className="ml-2 h-4 bg-[#aaa]" />
      <div className="ml-[10px] flex gap-[13px] text-[#b8b8b8]">
        <Svg w={7} h={8}><path d="M0 0h1.500v8H0zM7 0v8L2 4z" fill="currentColor" /></Svg>
        <Svg w={7} h={8}><path d="M6 0v8L1 4z" fill="currentColor" /></Svg>
        <Svg w={7} h={8}><path d="M1 0v8l5-4z" fill="currentColor" /></Svg>
        <Svg w={7} h={8}><path d="M0 0v8l5-4zM5.500 0H7v8H5.500z" fill="currentColor" /></Svg>
      </div>
      <button className="relative ml-3 h-6 w-[213px] shrink-0 self-start font-['Noto_Sans_CJK_KR',sans-serif] text-xs leading-6 whitespace-nowrap text-[#444]">
        <svg viewBox="0 0 213 24" preserveAspectRatio="none" aria-hidden="true" className="absolute inset-0 size-full">
          <path d="M0 0l6 20q1 3.500 5 3.500h190q4 0 5-3.500L213 0z" fill="#fff" stroke="#b5b5b5" />
        </svg>
        <span className="relative">3조 파이널 프로젝트_삼부도서관</span>
      </button>
      <button aria-label="새 탭" className="shrink-0 self-start">
        <Svg w={38} h={24}>
          <path d="M0 4l5 16q1 3.500 5 3.500h18q4 0 5-3.500L38 0" fill="#e6e6e6" stroke="#b0b0b0" />
          <path d="M17 7v10M12 12h10" stroke="#6a6a6a" strokeWidth="1.600" />
        </Svg>
      </button>
      <div className="ml-[575px] h-full w-[3px] shrink-0 border-x border-[#999]" />
      <div className="ml-[3px] flex h-[15px] flex-1 items-center justify-between bg-[#cecece]">
        <button aria-label="왼쪽으로" className="flex h-[15px] w-4 items-center justify-center border border-[#ccc] bg-[#ececec]">
          <Svg w={4} h={8}><path d="M4 0v8L0 4z" fill="#bbb" /></Svg>
        </button>
        <button aria-label="오른쪽으로" className="flex h-[15px] w-4 items-center justify-center border border-[#ccc] bg-[#ececec]">
          <Svg w={4} h={8}><path d="M0 0v8l4-4z" fill="#bbb" /></Svg>
        </button>
      </div>
      <div className="mr-[18px] ml-[3px] flex h-[15px] w-[10px] shrink-0 items-center justify-center border border-[#a8a8a8] bg-[#f1f1f3]">
        <span className="h-[10px] w-[2px] bg-[#777]" />
      </div>
    </div>
  );
}

function StatusBar() {
  const item = "flex h-[23px] items-center border-r border-[#d9d9d9] px-[11px]";
  return (
    <div className="flex h-[25px] items-center border-b border-[#c8c8c8] bg-[#fafafa] pl-[10px] font-['Noto_Sans_CJK_KR',sans-serif] text-xs leading-4 whitespace-nowrap text-[#666]">
      <span className={`${item} gap-[21px]`}><span>1/3쪽</span><span>1단</span></span>
      <span className={`${item} gap-[21px]`}><span>1줄</span><span>1칸</span></span>
      <span className={item}>1066글자</span>
      <span className={item}>문자 입력</span>
      <span className={item}>1/1 구역</span>
      <span className={item}>삽입</span>
      <span className={`${item} text-[#5a6cc4]`}>변경 내용 [기록 중지]</span>
      <span className={item}>타수 : 0타</span>
      <div className="ml-auto flex items-center">
        <button aria-label="쪽 윤곽" className="flex size-5 items-center justify-center border border-[#8f9bd0] bg-[#d6dcf5]">
          <Svg w={13} h={14} stroke="#666" strokeWidth="1.200"><path d="M.6.6h11.800v13H.6z" fill="#fff" /><path d="M3 13.500V3.500h7v10" /></Svg>
        </button>
        <button aria-label="폭 맞춤" className="ml-[11px]">
          <Svg w={14} h={14}><path d="M.6.6h12.800v12.800H.6z" stroke="#888" strokeWidth="1.200" /><path d="M2.500 7L5 5v4zM11.500 7L9 5v4z" fill="#666" /></Svg>
        </button>
        <button aria-label="쪽 맞춤" className="ml-[14px]">
          <Svg w={14} h={14}><path d="M.7.7h12.600v12.600H.7z" stroke="#5d6ba8" strokeWidth="1.400" /><path d="M3.500 3.500h7v7h-7z" fill="#777" stroke="#555" /></Svg>
        </button>
        <Divider className="ml-[13px] h-[14px]" />
        <button aria-label="축소" className="ml-[14px]">
          <Svg w={14} h={14}><path d="M.6.6h12.800v12.800H.6z" stroke="#aaa" strokeWidth="1.200" /><path d="M5 5h4v4H5z" stroke="#6c8bd0" strokeWidth="1.400" /></Svg>
        </button>
        <label className="relative ml-3 flex h-4 w-[90px] items-center">
          <span className="h-[2px] w-full bg-[#6573b4]" />
          <span className="absolute left-10 size-[10px] rounded-full border border-[#888] bg-white" />
          <input type="range" aria-label="확대 비율" className="absolute inset-0 w-full opacity-0" />
        </label>
        <button aria-label="확대" className="ml-[11px]">
          <Svg w={14} h={14}><path d="M.6.6h12.800v12.800H.6z" stroke="#aaa" strokeWidth="1.200" /><path d="M3 3h8v8H3z" fill="#dfe6fa" stroke="#7d93d4" strokeWidth="1.400" /></Svg>
        </button>
        <Svg w={15} h={15} className="ml-[17px]"><circle cx="6" cy="6" r="5" stroke="#888" strokeWidth="1.400" /><path d="M9.500 9.500l4.500 4.500" stroke="#666" strokeWidth="2.200" /></Svg>
        <span className="ml-[7px] w-8 text-[#777]">100%</span>
        <Svg w={13} h={13} className="mr-[2px] ml-[14px] self-end"><path d="M13 0L0 13" stroke="#ccc" /><path d="M12 6v6H6z" fill="#999" /></Svg>
      </div>
    </div>
  );
}

/* ---------- Taskbar ---------- */

const chrome = (
  <g>
    <circle cx="12" cy="12" r="11" fill="#4aa564" />
    <path d="M2.500 6.500A11 11 0 0121.500 6.500H12L7 14.500z" fill="#dc5145" />
    <path d="M21.500 6.500A11 11 0 0111.500 23L16.500 14.500 14 6.500z" fill="#f7cf52" />
    <circle cx="12" cy="12" r="5.200" fill="#fff" />
    <circle cx="12" cy="12" r="4" fill="#4a8af0" />
  </g>
);

const taskIcons = {
  탐색기: (
    <g>
      <path d="M1 3h8l2 2.500h11V21H1z" fill="#d9a73f" />
      <path d="M1 7h22v14H1z" fill="#f8d775" />
      <path d="M5 21v-8h14v8h-4v-4H9v4z" fill="#4d92d6" />
    </g>
  ),
  스토어: (
    <g>
      <path d="M8 7V1.500h8V7" stroke="#eee" strokeWidth="1.600" />
      <path d="M1 6h22v17H1z" fill="#f3f3f3" />
      <path d="M7.500 9.500h4v4h-4z" fill="#e25330" /><path d="M12.500 9.500h4v4h-4z" fill="#82b93c" />
      <path d="M7.500 14.500h4v4h-4z" fill="#3f9fe0" /><path d="M12.500 14.500h4v4h-4z" fill="#f1b730" />
    </g>
  ),
  크롬: chrome,
  엣지: (
    <g>
      <circle cx="12" cy="12" r="11.500" fill="#1d6fc0" />
      <path d="M.8 10.500C2 4 6.500.5 12 .5c6.500 0 11.500 4.500 11.500 9.500 0 4-3 6-6.500 6-2.500 0-3.500-1-3.500-2 0-.8 1-1 1-3C14.500 8.500 12 6.500 8.500 6.500 5 6.500 2 8 .8 10.500z" fill="#46b7c8" />
      <path d="M14 .7c5.500 1 9.500 5 9.500 9.300 0 4-3 6-6.500 6-2 0-3-.6-3.300-1.400 4-1 5.300-8.600.3-13.900z" fill="#6fd38a" />
      <path d="M13.500 14c0 1 1 2 3.500 2 2.200 0 4-.7 5.300-2-.8 2.800-2.600 4.500-4.300 5.500-5 1.500-9-2-8-6.500.4-2 1.500-3 3-3.200 1 .6 1.500 1 1.500 2.200z" fill="#26353f" />
    </g>
  ),
  명령: (
    <g>
      <path d="M1 3h22v19H1z" fill="#0b0b0b" stroke="#8c8c8c" />
      <path d="M1 3h22v2.500H1z" fill="#c9c9c9" />
      <path d="M4 8.500v3.500h2M7.500 9v.5M7.500 11v.5M9 8.500l2 3.500M12.500 12h4" stroke="#ddd" strokeWidth="1.100" />
    </g>
  ),
  스프링: (
    <g>
      <circle cx="12" cy="12" r="11.500" fill="#6fae4a" />
      <path d="M21 2.500c1.500 6 2 15-5.500 17.500-4 1.300-8 0-10 0 5-1 9-3 11.500-7-4 3.500-8 4-12.500 4.500C2.500 10 8 7.500 14 7c3 0 5.500-1.500 7-4.500z" fill="#fff" />
    </g>
  ),
  줌: (
    <g>
      <rect x="1" y="1" width="22" height="22" rx="6" fill="#4c8ff5" />
      <rect x="4.500" y="8" width="9.500" height="8.500" rx="1.800" fill="#fff" />
      <path d="M15 11l4.500-3v8.500L15 13.500z" fill="#fff" />
    </g>
  ),
  크롬2: (
    <g>
      {chrome}
      <circle cx="18" cy="18" r="6.500" fill="#4b5a62" />
      <path d="M14.500 15.500h3M16 15.500v2M14 18h4M15 20h2.500M19.500 15v5.500M19.500 17.500h2" stroke="#ddd" strokeWidth="1" />
    </g>
  ),
  메모: (
    <g>
      <circle cx="7.500" cy="7" r="6.500" fill="#7c8fe0" />
      <path d="M8 9l8-2 6 6-9 7z" fill="#7c8fe0" />
      <circle cx="15.500" cy="16.500" r="6.800" fill="#f8df3c" />
    </g>
  ),
  엑셀: (
    <g>
      <path d="M12 3h11v18H12z" fill="#fff" stroke="#2f7a50" />
      <path d="M15 6h2.500M15 9h2.500M15 12h2.500M15 15h2.500M15 18h2.500M19 6h2.500M19 9h2.500M19 12h2.500M19 15h2.500M19 18h2.500" stroke="#2f7a50" strokeWidth="1.500" />
      <path d="M1 3l13-2.500v23L1 21z" fill="#2b774c" />
      <path d="M4.500 8l5.500 8M10 8l-5.500 8" stroke="#fff" strokeWidth="1.800" />
    </g>
  ),
  서버: (
    <g>
      <path d="M3 1h17v18H3z" fill="#c9d7ea" stroke="#8fa8cb" />
      <path d="M3 5.500h17M3 10h17M3 14.500h17M11 1v18" stroke="#86a0c6" />
      <circle cx="17" cy="17" r="6.500" fill="#4fae35" />
      <path d="M15 13.500v7l5.500-3.500z" fill="#fff" />
    </g>
  ),
  캐릭터: (
    <g>
      <circle cx="7.500" cy="3" r="2.400" fill="#222" /><circle cx="16.500" cy="3" r="2.400" fill="#222" />
      <circle cx="12" cy="5.500" r="5.200" fill="#fff" />
      <path d="M9 5.500h2M13 5.500h2" stroke="#222" strokeWidth="2" />
      <circle cx="5.500" cy="13" r="2.500" fill="#eee" /><circle cx="18.500" cy="13" r="2.500" fill="#eee" />
      <circle cx="12" cy="15.500" r="7" fill="#f4f4f4" stroke="#555" />
      <path d="M9 11.500v7h6.500M7.500 13.500h7v6.500" stroke="#333" strokeWidth="1.500" />
      <path d="M5 22.500h5M14 22.500h5" stroke="#e8a23a" strokeWidth="2.400" />
    </g>
  ),
  괄호: (
    <g>
      <rect width="24" height="24" rx="2" fill="#4fa3d8" />
      <path d="M3 3h18v18H3z" fill="#3a3a3a" stroke="#fff" strokeWidth="1.500" />
      <path d="M6.500 6h4v2h-1.500v8h1.500v2h-4zM17.500 6h-4v2H15v8h-1.500v2h4z" fill="#3a3a3a" />
      <path d="M9 7.500h6v9H9z" fill="#fff" />
      <path d="M11.200 3.800h1.600v16.400h-1.600z" fill="#fff" />
    </g>
  ),
};

function TaskIcon({ name }) {
  if (name === "카톡")
    return (
      <span className="flex size-6 items-center justify-center bg-[#f9df34]">
        <span className="flex h-[14px] w-5 items-center justify-center rounded-full bg-[#3a1d1d] font-['Inter',sans-serif] text-[6px] leading-none font-black text-[#f9df34]">
          TALK
        </span>
      </span>
    );
  if (name === "한글")
    return (
      <span className="flex size-6 items-center justify-center rounded-tl-md rounded-br-md bg-[#3a8fd0] text-white">
        <HanGlyph className="h-[17px] w-3" />
      </span>
    );
  return <Svg w={24} h={24}>{taskIcons[name]}</Svg>;
}

const apps = [
  ["탐색기", "run"], ["스토어", ""], ["크롬", ""], ["엣지", "run"], ["명령", "run"], ["스프링", "run"],
  ["줌", "alert"], ["크롬2", "run"], ["메모", "run"], ["엑셀", "run"], ["카톡", "alert"], ["서버", "run"],
  ["캐릭터", "run"], ["괄호", "run"], ["한글", "focus"],
];

function Taskbar() {
  return (
    <footer className="flex h-10 bg-linear-to-r from-[#273640] from-30% to-[#1e2744]">
      <button aria-label="시작" className="flex w-12 shrink-0 items-center justify-center">
        <Svg w={17} h={17}><path d="M0 2.500L7.500 1.300V8H0zM8.500 1.200L17 0v8H8.500zM0 9h7.500v6.700L0 14.500zM8.500 9H17v8l-8.500-1.200z" fill="#fff" /></Svg>
      </button>
      <label className="flex w-[345px] shrink-0 items-center bg-[#f1f1f1] pl-3">
        <Svg w={17} h={17} stroke="#333" strokeWidth="1.500"><circle cx="10.500" cy="6" r="5" /><path d="M7 10l-6 6" /></Svg>
        <input
          aria-label="검색"
          placeholder="검색하려면 여기에 입력하십시오."
          className="ml-3 w-0 flex-1 bg-transparent text-base leading-5 outline-none placeholder:text-[#4a4a4a]"
        />
      </label>
      <button aria-label="작업 보기" className="flex w-[50px] shrink-0 items-center justify-center">
        <Svg w={17} h={17} stroke="#ddd" strokeWidth="1.300"><path d="M1 0v3h10V0M1 6h10v5H1zM1 17v-3h10v3M15 0v4M15 8.500v8.500" /><path d="M14 5h3v2.500h-3z" fill="#ddd" stroke="none" /></Svg>
      </button>
      {apps.map(([name, state]) => (
        <button
          key={name}
          aria-label={name}
          className={`flex w-[49px] shrink-0 flex-col items-center ${state === "alert" ? "bg-[#a46a3d]" : state === "focus" ? "bg-[#4a5766]" : ""}`}
        >
          <span className="flex flex-1 items-center"><TaskIcon name={name} /></span>
          <span
            className={`h-[2px] ${
              state === "alert" ? "w-full bg-[#e8722a]" : state === "focus" ? "w-full bg-[#7fb2e5]" : state === "run" ? "w-10 bg-[#7fb2e5]" : "w-10"
            }`}
          />
        </button>
      ))}
      <div className="ml-auto flex items-center text-[#e6e6ea]">
        <Svg w={13} h={8} stroke="currentColor" strokeWidth="1.500"><path d="M1 7l5.500-5.500L12 7" /></Svg>
        <Svg w={17} h={11} className="ml-[9px]"><path d="M4 5a5 4.500 0 019-1 3.500 3.500 0 011 7H3.500A3 3 0 014 5z" fill="#f2f2f2" /><path d="M4 5a5 4.500 0 019-1L8 6z" fill="#aab" /></Svg>
        <Svg w={12} h={17} className="ml-[9px]"><rect x="3" width="6" height="11" rx="1" fill="#fff" /><path d="M1 8v3.500q0 2 2 2h6q2 0 2-2V8M6 13.500V17M3.500 16.500h5" stroke="#ddd" strokeWidth="1.200" /></Svg>
        <Svg w={15} h={13} className="ml-[11px]" stroke="currentColor" strokeWidth="1.200"><path d="M1 4.500h2L6.500 1v11L3 8.500H1zM9.500 4.500l4.500 4.500M14 4.500L9.500 9" /></Svg>
        <Svg w={17} h={15} className="ml-[9px]" stroke="currentColor" strokeWidth="1.200"><path d="M6 2h10v8.500H3.500V6M6 13.500h8M9.500 10.500v3M1 1h4v4H1zM3 5v5" /></Svg>
        <Svg w={17} h={17} className="ml-[11px]" stroke="currentColor" strokeWidth="1.300"><path d="M5 11L12 1.500q2-1 2.500 1L8 12 5 14zM5 9q-4 0-4 3.500T4.500 16Q8 16 9 12.500T13 8q3-.5 3 1.500t-2 2" /></Svg>
        <Svg w={15} h={15} className="ml-[11px]"><circle cx="7.500" cy="7.500" r="7" fill="#858c98" /><path d="M4.500 4.500l6 6M10.500 4.500l-6 6" stroke="#222c42" strokeWidth="1.700" /></Svg>
        <span className="ml-[14px] flex size-[15px] items-center justify-center bg-[#eee] text-xs leading-none font-medium text-[#222]">한</span>
        <time className="ml-[15px] w-[67px] text-center text-xs leading-[18px] whitespace-nowrap">
          오후 4:56
          <br />
          2021-03-11
        </time>
        <Svg w={17} h={17} className="ml-5"><path d="M0 1h16v12H7l-3 3v-3H0z" fill="#fff" /><path d="M3 4.500h10M3 7h10M3 9.500h6" stroke="#39435c" /><circle cx="12.500" cy="12.500" r="4" fill="#222c47" /><path d="M11 14.500a2.500 2.500 0 002.500-4 2.800 2.800 0 11-2.500 4z" fill="#fff" /></Svg>
        <span className="mr-1 ml-[20px] h-10 w-px bg-[#5a6580]" />
      </div>
    </footer>
  );
}

export default function App() {
  return (
    <main className={`bg-white px-[68px] pt-[51px] pb-[84px] ${UI}`}>
      <div className="overflow-hidden rounded-[20px] shadow-[0_0_2px_rgba(0,0,0,0.5),0_24px_56px_rgba(0,0,0,0.32)]">
        <header className="flex h-[57px] items-center border-t border-[#c2c0c1] bg-[#ebe9ea] px-4">
          <div className="flex w-32 gap-4">
            {["닫기", "최소화", "확대"].map((l) => (
              <button key={l} aria-label={`창 ${l}`} className="size-6 rounded-full border border-[#b9b7b8] bg-[#d0cecf]" />
            ))}
          </div>
          <h1 className="flex-1 text-center font-['Inter','Noto_Sans_CJK_KR',sans-serif] text-[25px] leading-8 font-bold text-[#adabac]">
            Zoom 회의
          </h1>
          <div className="w-32" />
        </header>
        <VideoStrip />
        <section aria-label="공유 화면">
          <TitleRow />
          <MenuRow />
          <Ribbon />
          <FormatBar />
          <Workspace />
          <TabBar />
          <StatusBar />
          <Taskbar />
        </section>
        <div className="h-[195px] bg-[#111111]" />
      </div>
    </main>
  );
}
